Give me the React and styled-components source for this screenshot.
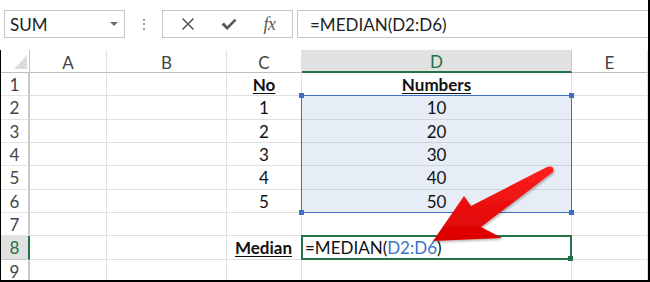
import React from 'react';
import styled, { createGlobalStyle } from 'styled-components';

const Global = createGlobalStyle`
  html, body { margin: 0; padding: 0; background: #fff; }
  body { font-family: Lato, "Liberation Sans", sans-serif; }
`;

const GREEN = '#217346';
const BLUE = '#3d6fc6';
const GRID = '#e0e0e0';

const Frame = styled.div`
  position: relative;
  width: 650px;
  height: 282px;
  box-sizing: border-box;
  border-right: 2px solid #000;
  border-bottom: 2px solid #000;
  overflow: hidden;
  background: #fff;
  display: flex;
  flex-direction: column;
`;

const FormulaBar = styled.div`
  display: flex;
  align-items: center;
  height: 28px;
  margin: 10px 0 12px 0;
  padding-left: 4px;
  flex: none;
`;

const NameBox = styled.div`
  width: 121px;
  height: 28px;
  box-sizing: border-box;
  border: 1px solid #c6c6c6;
  display: flex;
  align-items: center;
  justify-content: space-between;
  padding: 0 6px 0 5px;
  font-size: 17px;
  color: #1e1e1e;
`;

const DropArrow = styled.span`
  width: 0;
  height: 0;
  border-left: 4px solid transparent;
  border-right: 4px solid transparent;
  border-top: 4px solid #6d6d6d;
`;

const Grip = styled.div`
  width: 37px;
  height: 28px;
  display: flex;
  flex-direction: column;
  align-items: center;
  justify-content: center;
  gap: 2.5px;
`;

const Dot = styled.span`
  width: 2px;
  height: 2px;
  background: #9a9a9a;
`;

const ButtonGroup = styled.div`
  width: 131px;
  height: 28px;
  box-sizing: border-box;
  border: 1px solid #c6c6c6;
  display: flex;
  align-items: center;
  padding-left: 4px;
  margin-right: 4px;
`;

const IconSlot = styled.div`
  width: 41px;
  height: 26px;
  display: flex;
  align-items: center;
  justify-content: center;
  color: #595959;
`;

const Fx = styled.span`
  font-family: "Liberation Serif", "DejaVu Serif", serif;
  font-style: italic;
  font-size: 18px;
  color: #595959;
  letter-spacing: -0.5px;
`;

const FormulaInput = styled.div`
  flex: 1;
  height: 28px;
  box-sizing: border-box;
  border: 1px solid #c6c6c6;
  border-right: none;
  display: flex;
  align-items: center;
  padding-left: 12px;
  font-size: 17px;
  color: #1e1e1e;
`;

const Sheet = styled.div`
  flex: 1;
  display: grid;
  grid-template-columns: 29px 77px 120px 75px 270px 1fr;
  grid-template-rows: 23px repeat(9, 23.33px);
  border-left: 1px solid #000;
  overflow: hidden;
`;

const Corner = styled.div`
  grid-column: 1;
  grid-row: 1;
  position: relative;
  border-right: 1px solid #c8c8c8;
  border-bottom: 1px solid #c0c0c0;
  &::after {
    content: '';
    position: absolute;
    right: 2px;
    bottom: 3px;
    width: 0;
    height: 0;
    border-left: 13px solid transparent;
    border-bottom: 14px solid #dcdcdc;
  }
`;

const ColHead = styled.div`
  grid-column: ${p => p.$col};
  grid-row: 1;
  box-sizing: border-box;
  display: flex;
  align-items: center;
  justify-content: center;
  font-size: 17px;
  padding-top: 2px;
  color: ${p => (p.$active ? GREEN : '#444')};
  background: ${p => (p.$active ? '#e1e1e1' : '#fff')};
  border-right: 1px solid ${p => (p.$active ? '#c8c8c8' : '#e3e3e3')};
  border-bottom: ${p => (p.$active ? `2px solid ${GREEN}` : '1px solid #c0c0c0')};
`;

const RowHead = styled.div`
  grid-column: 1;
  grid-row: ${p => p.$row};
  box-sizing: border-box;
  display: flex;
  align-items: center;
  justify-content: center;
  font-size: 17px;
  padding-top: 1px;
  color: ${p => (p.$active ? GREEN : '#444')};
  background: ${p => (p.$active ? '#e1e1e1' : '#fff')};
  border-bottom: 1px solid ${p => (p.$active ? '#c8c8c8' : '#e3e3e3')};
  border-right: ${p => (p.$active ? `2px solid ${GREEN}` : '2px solid #c8c8c8')};
`;

const Cell = styled.div`
  grid-column: ${p => p.$col};
  grid-row: ${p => p.$row};
  box-sizing: border-box;
  display: flex;
  align-items: center;
  justify-content: ${p => p.$align || 'flex-start'};
  padding: 1px ${p => (p.$align === 'flex-end' ? '9px' : '3px')} 0 3px;
  font-size: 17px;
  color: #111;
  font-weight: ${p => (p.$bold ? 700 : 400)};
  text-decoration: ${p => (p.$bold ? 'underline' : 'none')};
  text-underline-offset: 2px;
  white-space: nowrap;
  background: ${p => (p.$sel ? '#e7edf7' : '#fff')};
  border-right: 1px solid ${p => (p.$sel ? '#d0d7e3' : GRID)};
  border-bottom: 1px solid ${p => (p.$sel ? '#cdd4e0' : GRID)};
`;

const Ref = styled.span`
  color: #3b73c9;
`;

const Handle = styled.span`
  position: absolute;
  width: 5px;
  height: 5px;
  background: ${p => p.$color};
  ${p => (p.$top ? 'top: -3px;' : 'bottom: -3px;')}
  ${p => (p.$left ? 'left: -3px;' : 'right: -3px;')}
`;

const Selection = styled.div`
  grid-column: 5;
  grid-row: 3 / 8;
  position: relative;
  border: 1.5px solid ${BLUE};
  margin: -1px 0 0 -1px;
  pointer-events: none;
`;

const ActiveCell = styled.div`
  grid-column: 5;
  grid-row: 9;
  position: relative;
  border: 2px solid ${GREEN};
  margin: -1px 0 0 -1px;
  pointer-events: none;
`;

const ArrowLayer = styled.svg`
  position: absolute;
  left: 0;
  top: 0;
  width: 650px;
  height: 282px;
  pointer-events: none;
`;

const cols = ['A', 'B', 'C', 'D', 'E'];
const data = [
  { n: '1', v: '10' },
  { n: '2', v: '20' },
  { n: '3', v: '30' },
  { n: '4', v: '40' },
  { n: '5', v: '50' },
];

export default function App() {
  const cells = [];
  for (let r = 1; r <= 9; r++) {
    const gr = r + 1;
    for (let c = 0; c < 5; c++) {
      const gc = c + 2;
      let content = null;
      let align;
      let bold = false;
      const sel = c === 3 && r >= 2 && r <= 6;
      if (r === 1 && c === 2) { content = 'No'; align = 'center'; bold = true; }
      if (r === 1 && c === 3) { content = 'Numbers'; align = 'center'; bold = true; }
      if (r >= 2 && r <= 6 && c === 2) { content = data[r - 2].n; align = 'center'; }
      if (r >= 2 && r <= 6 && c === 3) { content = data[r - 2].v; align = 'center'; }
      if (r === 8 && c === 2) { content = 'Median'; align = 'flex-end'; bold = true; }
      if (r === 8 && c === 3) {
        content = (
          <span>=MEDIAN(<Ref>D2:D6</Ref>)</span>
        );
      }
      cells.push(
        <Cell key={`${r}-${c}`} $row={gr} $col={gc} $align={align} $bold={bold} $sel={sel}>
          {content}
        </Cell>
      );
    }
  }

  return (
    <>
      <Global />
      <Frame>
        <FormulaBar>
          <NameBox>
            <span>SUM</span>
            <DropArrow />
          </NameBox>
          <Grip>
            <Dot />
            <Dot />
            <Dot />
          </Grip>
          <ButtonGroup>
            <IconSlot>
              <svg width="14" height="14" viewBox="0 0 14 14">
                <path d="M1.5 1.5 L12.5 12.5 M12.5 1.5 L1.5 12.5" stroke="#595959" strokeWidth="1.6" fill="none" />
              </svg>
            </IconSlot>
            <IconSlot>
              <svg width="16" height="13" viewBox="0 0 16 13">
                <path d="M0.5 6.5 L3 4.6 L6.2 8.2 L13.6 0.8 L15.5 2.6 L6.2 12 Z" fill="#595959" />
              </svg>
            </IconSlot>
            <IconSlot>
              <Fx>fx</Fx>
            </IconSlot>
          </ButtonGroup>
          <FormulaInput>=MEDIAN(D2:D6)</FormulaInput>
        </FormulaBar>
        <Sheet>
          <Corner />
          {cols.map((l, i) => (
            <ColHead key={l} $col={i + 2} $active={l === 'D'}>{l}</ColHead>
          ))}
          {Array.from({ length: 9 }, (_, i) => (
            <RowHead key={i} $row={i + 2} $active={i + 1 === 8}>{i + 1}</RowHead>
          ))}
          {cells}
          <Selection>
            <Handle $color={BLUE} $top $left />
            <Handle $color={BLUE} $top />
            <Handle $color={BLUE} $left />
            <Handle $color={BLUE} />
          </Selection>
          <ActiveCell>
            <Handle $color={GREEN} />
          </ActiveCell>
        </Sheet>
        <ArrowLayer viewBox="0 0 650 282">
          <defs>
            <linearGradient id="ag" x1="0" y1="0" x2="0" y2="1">
              <stop offset="0" stopColor="#ff2020" />
              <stop offset="1" stopColor="#d90000" />
            </linearGradient>
            <filter id="sh" x="-20%" y="-20%" width="140%" height="140%">
              <feDropShadow dx="1" dy="1.5" stdDeviation="1.2" floodColor="#000" floodOpacity="0.3" />
            </filter>
          </defs>
          <path
            d="M433 241 L464 196 L471 206 L547 167 Q555 165 553 172 L481 227 L502 238 Z"
            fill="url(#ag)"
            filter="url(#sh)"
          />
        </ArrowLayer>
      </Frame>
    </>
  );
}
